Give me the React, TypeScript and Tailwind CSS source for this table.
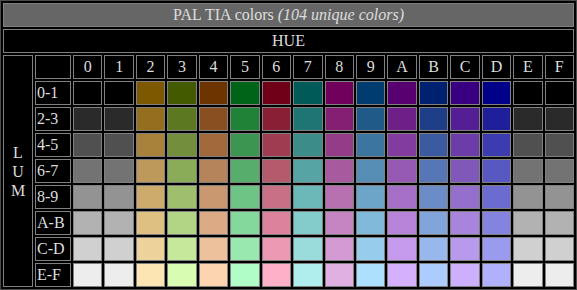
import React from "react";

const gray = ["#000000", "#2a2a2a", "#505050", "#737373", "#939393", "#b2b2b2", "#d0d0d0", "#ededed"];

const hues: string[][] = [
  gray,
  gray,
  ["#7e5800", "#956f1f", "#a8823a", "#bd9a5c", "#cdab6d", "#dfc083", "#edd29b", "#fde4b3"],
  ["#445a00", "#5c7820", "#738e3c", "#8aab58", "#a0bf6e", "#b1d585", "#c5e89a", "#d8fdb2"],
  ["#6e3400", "#8a4f20", "#a2693c", "#b5845a", "#c99870", "#dcab85", "#ecc19c", "#fdd4b0"],
  ["#006418", "#1f8237", "#3c9652", "#57ae6c", "#6dc485", "#84d89b", "#98e8b0", "#b0fdc8"],
  ["#700018", "#881f34", "#a03c52", "#b45a6c", "#c87086", "#dc829c", "#ec9ab3", "#fdb0c8"],
  ["#005a58", "#1f7474", "#3c8c8a", "#57a4a4", "#6cb8b8", "#84cbcb", "#9adcdc", "#b0eded"],
  ["#70005c", "#841f74", "#953c88", "#a85a9e", "#b770b0", "#c584c2", "#d49ad3", "#e0b0e2"],
  ["#003c70", "#1f5a88", "#3c76a0", "#578eb6", "#6ca5c8", "#81b9db", "#98cced", "#ace0fd"],
  ["#580070", "#6e1f88", "#823ca0", "#965ab4", "#a770c8", "#b784da", "#c69aec", "#d4b0fd"],
  ["#002070", "#1f3e88", "#3c5aa0", "#5776b6", "#6c8cc8", "#81a4db", "#98b8ed", "#acccfd"],
  ["#380080", "#541f94", "#6c3ca8", "#8058ba", "#9470cc", "#a884dc", "#b89aec", "#ccb0fd"],
  ["#000088", "#1f1f9c", "#3c3cb0", "#5858c2", "#6c6cd0", "#8484e0", "#9a9aee", "#b0b0fd"],
  gray,
  gray,
];

const hueLabels = ["0", "1", "2", "3", "4", "5", "6", "7", "8", "9", "A", "B", "C", "D", "E", "F"];
const lumLabels = ["0-1", "2-3", "4-5", "6-7", "8-9", "A-B", "C-D", "E-F"];

const cell = "border border-[#808080]";

export default function App() {
  return (
    <div
      className="w-[577px] h-[290px] bg-black border border-[#4a4a4a] p-[2px] text-[#dddddd] text-[16px] leading-none"
      style={{ fontFamily: '"Liberation Serif", "Times New Roman", serif' }}
    >
      <div className="grid h-full gap-[2px] grid-cols-[30px_36px_repeat(16,minmax(0,1fr))] grid-rows-[repeat(11,24px)]">
        <div className={`${cell} col-span-18 bg-[#666666] flex items-center justify-center`}>
          <span>
            PAL TIA colors <i>(104 unique colors)</i>
          </span>
        </div>
        <div className={`${cell} col-span-18 flex items-center justify-center`}>HUE</div>
        <div className={`${cell} row-span-9 flex flex-col items-center justify-center leading-[19px]`}>
          <span>L</span>
          <span>U</span>
          <span>M</span>
        </div>
        <div className={cell} />
        {hueLabels.map((h) => (
          <div key={h} className={`${cell} flex items-center justify-center`}>
            {h}
          </div>
        ))}
        {lumLabels.map((l, li) => (
          <React.Fragment key={l}>
            <div className={`${cell} flex items-center pl-px`}>{l}</div>
            {hues.map((col, hi) => (
              <div key={hi} className={cell} style={{ backgroundColor: col[li] }} />
            ))}
          </React.Fragment>
        ))}
      </div>
    </div>
  );
}
